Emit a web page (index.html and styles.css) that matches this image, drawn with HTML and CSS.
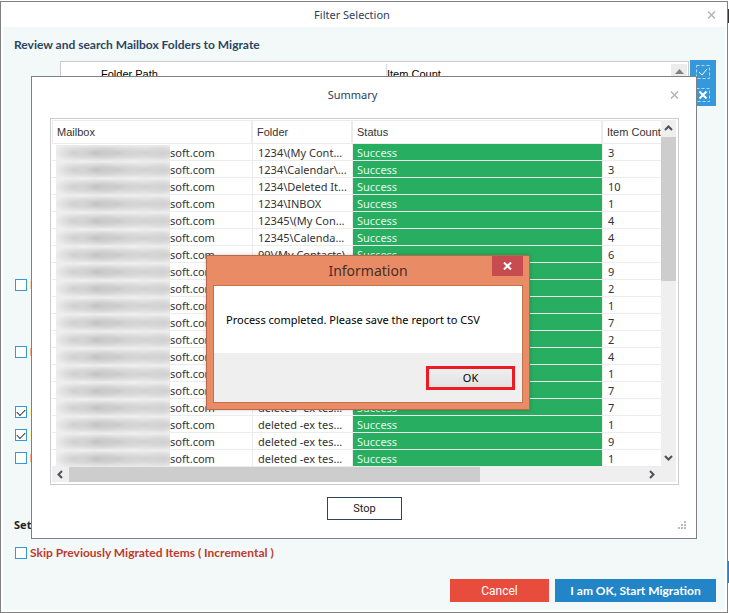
FILE: index.html
```html
<!DOCTYPE html>
<html lang="en">
<head>
<meta charset="utf-8">
<title>Filter Selection</title>
<link rel="stylesheet" href="styles.css">
</head>
<body>
<main class="window">
  <header class="titlebar">
    <h1 class="title">Filter Selection</h1>
    <button class="close" aria-label="Close"><svg width="10" height="10" viewBox="0 0 10 10"><path d="M1 1.500l7 7M8 1.500l-7 7"/></svg></button>
  </header>
  <div class="content">
    <h2 class="heading">Review and search Mailbox Folders to Migrate</h2>
    <div class="folders">
      <div class="folder-list">
        <span class="folder-path">Folder Path</span>
        <span class="folder-count">Item Count</span>
        <span class="scroll-up"><svg width="9" height="5" viewBox="0 0 9 5"><path d="M0 5L4.500 0L9 5z"/></svg></span>
      </div>
      <div class="tools">
        <button class="tool" aria-label="Select all"><svg width="14" height="14" viewBox="0 0 14 14"><path class="dash" d="M.5 .5h13v13H.5z"/><path class="tick" d="M3 7l3 3l5-6"/></svg></button>
        <button class="tool" aria-label="Clear selection"><svg width="14" height="14" viewBox="0 0 14 14"><path class="dash" d="M.5 .5h13v13H.5z"/><path class="cross" d="M3.500 3.500l7 7M10.500 3.500l-7 7"/></svg></button>
      </div>
    </div>
    <div class="options">
      <label class="option option-far"><input type="checkbox" aria-label="Filter one"><span class="mark mark-sand"></span></label>
      <label class="option option-wide"><input type="checkbox" aria-label="Filter two"><span class="mark mark-orange"></span></label>
      <label class="option"><input type="checkbox" checked aria-label="Filter three"><span class="mark mark-yellow"></span></label>
      <label class="option"><input type="checkbox" checked aria-label="Filter four"><span class="mark mark-yellow"></span></label>
      <label class="option"><input type="checkbox" aria-label="Filter five"><span class="mark mark-orange"></span></label>
    </div>
    <p class="set">Set</p>
    <label class="option skip"><input type="checkbox">Skip Previously Migrated Items ( Incremental )</label>
    <footer class="actions">
      <button class="btn cancel">Cancel</button>
      <button class="btn start">I am OK, Start Migration</button>
    </footer>
  </div>
</main>

<section class="summary" role="dialog" aria-labelledby="summary-title">
  <header class="summary-bar">
    <h2 class="title" id="summary-title">Summary</h2>
    <button class="close" aria-label="Close"><svg width="10" height="10" viewBox="0 0 10 10"><path d="M1 1.500l7 7M8 1.500l-7 7"/></svg></button>
  </header>
  <div class="report">
    <table class="table">
      <colgroup><col class="c-mail"><col class="c-folder"><col><col class="c-count"></colgroup>
      <thead><tr><th>Mailbox</th><th>Folder</th><th>Status</th><th>Item Count</th></tr></thead>
      <tbody id="rows"></tbody>
    </table>
    <div class="vbar">
      <svg width="15" height="17" viewBox="0 0 15 17"><path d="M4 10L7.500 6.500L11 10"/></svg>
      <div class="vthumb"></div>
      <svg width="15" height="16" viewBox="0 0 15 16"><path d="M4 5L7.500 8.500L11 5"/></svg>
    </div>
    <div class="hbar">
      <svg width="17" height="15" viewBox="0 0 17 15"><path d="M10 4L6.500 7.500L10 11"/></svg>
      <div class="hthumb"></div>
      <svg width="17" height="15" viewBox="0 0 17 15"><path d="M7 4L10.500 7.500L7 11"/></svg>
    </div>
  </div>
  <div class="summary-foot"><button class="stop">Stop</button></div>
  <svg class="grip" width="8" height="8" viewBox="0 0 8 8"><path d="M6 0h2v2H6zM3 3h2v2H3zM6 3h2v2H6zM0 6h2v2H0zM3 6h2v2H3zM6 6h2v2H6z"/></svg>
</section>

<section class="info" role="alertdialog" aria-labelledby="info-title">
  <header class="info-bar">
    <h2 class="info-title" id="info-title">Information</h2>
    <button class="info-close" aria-label="Close"><svg width="9" height="8" viewBox="0 0 9 8"><path d="M1 .5l7 7M8 .5l-7 7"/></svg></button>
  </header>
  <div class="info-body">
    <p class="info-text">Process completed. Please save the report to CSV</p>
    <div class="info-foot"><button class="ok">OK</button></div>
  </div>
</section>
<script src="rows.js"></script>
</body>
</html>
```
FILE: rows.js
```js
const done = 'Success';
const items = [
  ['1234\\(My Cont...', done, 3], ['1234\\Calendar\\...', done, 3],
  ['1234\\Deleted It...', done, 10], ['1234\\INBOX', done, 1],
  ['12345\\(My Con...', done, 4], ['12345\\Calenda...', done, 4],
  ['99\\(My Contacts)', done, 6], ['', '', 9], ['', '', 2], ['', '', 1],
  ['', '', 7], ['', '', 2], ['', '', 4], ['', '', 1], ['', '', 7],
  ['deleted -ex tes...', done, 7], ['deleted -ex tes...', done, 1],
  ['deleted -ex tes...', done, 9], ['deleted -ex tes...', done, 1]
];
const body = document.getElementById('rows');
for (const [folder, state, count] of items) {
  const row = body.insertRow();
  const mail = row.insertCell();
  mail.className = 'mail';
  const smudge = document.createElement('span');
  smudge.className = 'smudge';
  mail.append(smudge, 'soft.com');
  row.insertCell().textContent = folder;
  const status = row.insertCell();
  status.className = 'status';
  status.textContent = state;
  row.insertCell().textContent = count;
}
```
FILE: styles.css
```css
* { box-sizing: border-box; }
body {
  margin: 0;
  min-height: 100vh;
  padding: 1px 1px 0 0;
  display: flex;
  position: relative;
  background: linear-gradient(#fff 9px, #333 9px, #333 23px, #fff 23px, #fff 561px, #2185c8 561px, #2185c8 583px, #fff 583px);
  font: 11px/16px "Noto Sans", "Open Sans", sans-serif;
  color: #222;
}
h1, h2, p { margin: 0; font: inherit; }
button { font: inherit; border: 0; padding: 0; border-radius: 0; }
svg { display: block; }

.window {
  flex: 1;
  display: flex;
  flex-direction: column;
  border: 1px solid #808080;
  background: #fff;
  padding: 0 2px 2px;
}
.titlebar, .summary-bar { display: grid; grid-template-columns: 1fr auto 1fr; align-items: center; }
.titlebar { height: 25px; padding-right: 8px; }
.title { grid-column: 2; color: #2c3e5c; }
.titlebar .title { margin-right: 16px; }
.close { justify-self: end; background: none; }
.close svg { fill: none; stroke: #b4b4b4; stroke-width: 1.5; }

.content {
  flex: 1;
  display: flex;
  flex-direction: column;
  background: #f3f9f9;
  padding: 10px 9px 8px 11px;
}
.heading { font: 700 12px/16px Lato, sans-serif; color: #2c4660; }
.folders { display: flex; gap: 1px; margin: 7px 0 0 46px; }
.folder-list {
  flex: 1;
  height: 186px;
  margin-top: 1px;
  display: grid;
  grid-template-columns: 325px 1fr 16px;
  align-items: start;
  border: 1px solid #ccc;
  background: #fff;
  padding: 2px 1px;
  font-family: "Liberation Sans", sans-serif;
  color: #000;
}
.folder-path { padding: 2px 0 0 39px; border-right: 1px solid #ddd; }
.folder-count { padding-top: 2px; }
.scroll-up { height: 16px; background: #ececec; padding: 5px 4px; }
.scroll-up path { fill: #808080; }
.tools { width: 26px; height: 46px; background: #3498db; display: grid; place-items: center; }
.tool { background: none; }
.tool svg { fill: none; stroke: #fff; }
.dash { stroke: #b5dbf3; stroke-dasharray: 3 2; }
.tick { stroke-width: 1; }
.cross { stroke-width: 2; }

.options { display: flex; flex-direction: column; gap: 11px; margin-top: 32px; }
.option { display: flex; align-items: center; gap: 3px; height: 12px; }
.option-far { margin-bottom: 44px; }
.option-wide { margin-bottom: 37px; }
.option input {
  appearance: none;
  width: 12px;
  height: 12px;
  margin: 0 0 0 1px;
  border: 1px solid #3498db;
  background: #fff;
}
.option input:checked {
  display: grid;
  place-items: center;
}
.option input:checked::before {
  content: "";
  width: 7px;
  height: 4px;
  margin-bottom: 2px;
  border: solid #333;
  border-width: 0 0 1px 1px;
  rotate: -45deg;
}
.mark { width: 3px; height: 8px; }
.mark-sand { background: #fad7a0; }
.mark-orange { background: #f5b17a; }
.mark-yellow { background: #fff9a8; }
.set { margin-top: 53px; font-weight: 700; color: #222; }
.skip { margin-top: 14px; font: 700 12px/12px Lato, sans-serif; color: #c0392b; }
.actions { display: flex; justify-content: flex-end; gap: 6px; margin-top: auto; }
.btn { height: 23px; font: 12px/16px Roboto, sans-serif; color: #fff; }
.cancel { width: 99px; background: #e84c3d; }
.start { width: 161px; background: #2185c8; font: 700 12px/16px Lato, sans-serif; }

.summary {
  position: absolute;
  top: 76px;
  left: 31px;
  right: 32px;
  border: 1px solid #808080;
  background: #fff;
  padding: 0 17px 18px 18px;
}
.summary-bar { height: 41px; padding-bottom: 5px; }
.summary-bar .title { margin-right: 24px; }
.summary-bar .close { margin-right: -1px; }
.report {
  display: grid;
  grid-template-columns: 1fr 15px;
  border: 1px solid #ccc;
  padding: 1px 2px 2px 1px;
}
.table { width: 100%; table-layout: fixed; border-collapse: separate; border-spacing: 0; color: #333; }
.c-mail { width: 201px; }
.c-folder { width: 100px; }
.c-count { width: 58px; }
.table th {
  height: 24px;
  padding: 0 0 0 4px;
  font: 400 11px/16px "Liberation Sans", sans-serif;
  text-align: left;
  white-space: nowrap;
  border: solid #ececec;
  border-width: 1px 2px 1px 0;
}
.table th:first-child { border-left-width: 1px; }
.table th:last-child { border-right: 0; }
.table td {
  height: 17px;
  padding: 1px 0 0 5px;
  line-height: 15px;
  white-space: nowrap;
  overflow: hidden;
  border-bottom: 1px solid #ececec;
  border-right: 1px solid #ececec;
}
.table td:last-child { border-right: 0; }
.table .mail { padding-left: 4px; overflow: visible; }
.table .status { background: #27ae60; background-clip: padding-box; color: #e6f7ec; padding-left: 4px; }
.smudge {
  display: inline-block;
  width: 114px;
  height: 17px;
  margin-bottom: -2px;
  vertical-align: top;
  background:
    radial-gradient(20px 9px at 18px 8px, #cfcfcf, transparent),
    radial-gradient(26px 9px at 40px 8px, #c2c2c2, transparent),
    radial-gradient(28px 9px at 62px 8px, #cacaca, transparent),
    radial-gradient(30px 9px at 90px 8px, #d0d0d0, transparent),
    radial-gradient(20px 9px at 108px 8px, #d0d0d0, transparent),
    #eee;
}
.vbar, .hbar { background: #efefef; display: flex; }
.vbar { flex-direction: column; }
.vthumb { height: 144px; background: #cdcdcd; }
.vbar svg:last-child { margin-top: auto; }
.hbar { grid-column: 1 / -1; height: 15px; padding-right: 16px; position: relative; }
.hthumb { width: 411px; background: #cdcdcd; }
.hbar svg:last-child { margin-left: auto; }
.vbar path, .hbar path { fill: none; stroke: #505058; stroke-width: 2; }
.summary-foot { display: flex; justify-content: center; margin-top: 12px; }
.stop { width: 75px; height: 23px; border: 1px solid #2c4660; background: #fff; color: #222; font: 11px/16px Roboto, sans-serif; }
.grip { position: absolute; right: 10px; bottom: 9px; fill: #bbb; }

.info {
  position: absolute;
  top: 255px;
  left: 206px;
  width: 324px;
  border: 1px solid #b8684a;
  background: #e98c65;
  padding: 0 6px 6px;
  box-shadow: 0 0 4px rgba(0, 0, 0, .2);
}
.info-bar { display: grid; grid-template-columns: 1fr auto 1fr; height: 29px; }
.info-title { grid-column: 2; font-size: 14px; line-height: 30px; color: #4a2c24; }
.info-close { justify-self: end; width: 31px; height: 20px; background: #c74c50; display: grid; place-items: center; }
.info-close path { stroke: #fff; stroke-width: 2; }
.info-body { border: 1px solid #c4714e; background: #efefef; }
.info-text { background: #fff; height: 67px; padding: 26px 12px; color: #000; }
.info-foot { display: flex; justify-content: flex-end; padding: 13px 7px 12px; }
.ok { width: 89px; height: 24px; border: 3px solid #ed1c24; background: linear-gradient(#efefef, #e2e2e2); color: #000; }
```
